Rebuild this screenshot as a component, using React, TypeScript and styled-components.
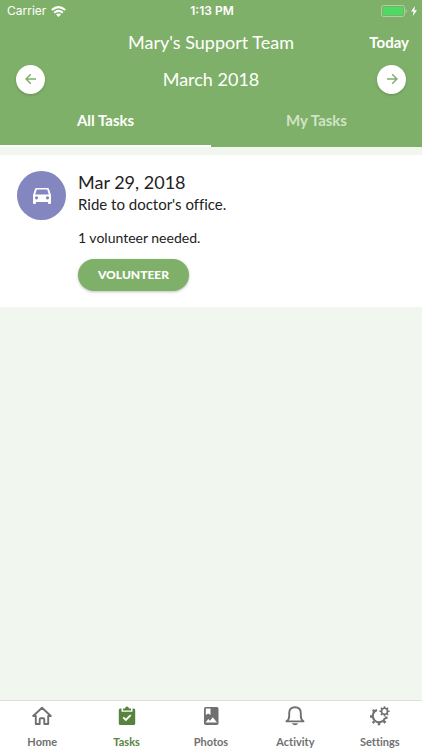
import React, { useState } from "react";
import styled, { createGlobalStyle } from "styled-components";

const GREEN = "#7fb069";

const GlobalStyle = createGlobalStyle`
  *, *::before, *::after { box-sizing: border-box; }
  body { margin: 0; background: #f1f6ef; color: #222; font-family: Lato, "Open Sans", sans-serif; font-variant-ligatures: none; }
  button { font: inherit; border: 0; padding: 0; cursor: pointer; }
  svg { display: block; flex: none; }
`;

const Screen = styled.div`
  min-height: 100vh;
  display: flex;
  flex-direction: column;
`;

const Header = styled.header`
  background: ${GREEN};
  color: #fff;
`;

const StatusBar = styled.div`
  display: grid;
  grid-template-columns: 1fr auto 1fr;
  align-items: center;
  height: 22px;
  padding: 0 5px 0 7px;
  font: 400 12px/22px Inter, sans-serif;
`;

const StatusGroup = styled.div<{ $end?: boolean }>`
  display: flex;
  align-items: center;
  gap: ${(p) => (p.$end ? 4 : 5)}px;
  justify-content: ${(p) => (p.$end ? "flex-end" : "flex-start")};
`;

const Clock = styled.time`
  font-weight: 600;
`;

const TitleRow = styled.div`
  display: grid;
  grid-template-columns: 1fr auto 1fr;
  align-items: center;
  height: 40px;
  padding: 0 13px;
`;

const Title = styled.h1`
  grid-column: 2;
  margin: 0;
  font-size: 18px;
  line-height: 24px;
  font-weight: 400;
`;

const TodayButton = styled.button`
  justify-self: end;
  background: none;
  color: #fff;
  && { font-weight: 700; font-size: 15px; line-height: 24px; }
`;

const MonthRow = styled.div`
  display: flex;
  align-items: center;
  justify-content: space-between;
  height: 34px;
  padding: 0 16px;
`;

const Month = styled.h2`
  margin: 0;
  font-size: 18px;
  line-height: 24px;
  font-weight: 400;
`;

const RoundButton = styled.button`
  display: grid;
  place-items: center;
  width: 29px;
  height: 29px;
  border-radius: 50%;
  background: #fff;
  color: ${GREEN};
  box-shadow: 0 1px 3px rgba(0, 0, 0, 0.2);
`;

const Tabs = styled.div`
  display: grid;
  grid-template-columns: 1fr 1fr;
`;

const Tab = styled.button<{ $active: boolean }>`
  height: 51px;
  background: none;
  color: ${(p) => (p.$active ? "#fff" : "#cfe4c6")};
  border-bottom: 2px solid ${(p) => (p.$active ? "#fff" : "transparent")};
  && { padding-bottom: 2px; font-weight: 700; font-size: 15px; line-height: 20px; }
`;

const Content = styled.main`
  flex: 1;
  padding-top: 8px;
`;

const TaskCard = styled.article`
  display: flex;
  align-items: flex-start;
  gap: 12px;
  padding: 16px 17px;
  background: #fff;
`;

const Badge = styled.div`
  display: grid;
  place-items: center;
  flex: none;
  width: 49px;
  height: 49px;
  border-radius: 50%;
  background: #8386bf;
  color: #fff;
`;

const TaskBody = styled.div`
  display: flex;
  flex-direction: column;
  align-items: flex-start;
`;

const TaskDate = styled.h3`
  margin: 0;
  font-size: 18px;
  line-height: 22px;
  font-weight: 400;
`;

const TaskText = styled.p`
  margin: 0;
  font-size: 15px;
  line-height: 22px;
`;

const TaskNeed = styled.p`
  margin: 13px 0 11px;
  font-size: 14px;
  line-height: 20px;
`;

const VolunteerButton = styled.button`
  height: 32px;
  border-radius: 16px;
  background: ${GREEN};
  color: #fff;
  box-shadow: 0 1px 3px rgba(0, 0, 0, 0.25);
  && { padding: 0 20px; font-weight: 900; font-size: 12px; line-height: 32px; }
`;

const TabBar = styled.nav`
  position: sticky;
  bottom: 0;
  display: grid;
  grid-template-columns: repeat(5, 1fr);
  height: 50px;
  background: #fff;
  border-top: 1px solid #dcdfdb;
`;

const NavLink = styled.a<{ $active?: boolean }>`
  display: flex;
  flex-direction: column;
  align-items: center;
  gap: 7px;
  padding-top: 4px;
  color: ${(p) => (p.$active ? "#56843f" : "#707070")};
  font-size: 11px;
  line-height: 16px;
  font-weight: 700;
  text-decoration: none;
`;

const WifiIcon = () => (
  <svg width="15" height="11" viewBox="0 0 15 11" fill="none" stroke="currentColor" strokeWidth="2.1" aria-hidden="true">
    <path d="M.8 4Q7.5-1.8 14.2 4M3.2 6.7Q7.5 3.1 11.8 6.7" />
    <path d="M5 8.4Q7.5 6.5 10 8.400L7.500 11Z" fill="currentColor" stroke="none" />
  </svg>
);

const BatteryIcon = () => (
  <svg width="26" height="12" viewBox="0 0 26 12" aria-hidden="true">
    <rect x=".5" y=".5" width="23" height="11" rx="2" fill="none" stroke="#b0cea3" />
    <rect x="2" y="2" width="20" height="8" rx="1" fill="#4cd964" />
    <path d="M24.7 4Q26 4.5 26 6T24.7 8Z" fill="#b0cea3" />
  </svg>
);

const BoltIcon = () => (
  <svg width="6" height="10" viewBox="0 0 6 10" fill="currentColor" aria-hidden="true">
    <path d="M4 0 0 5.6H2.6L1.8 10 6 4.2H3.4Z" />
  </svg>
);

const ArrowIcon = ({ back = false }: { back?: boolean }) => (
  <svg width="12" height="12" viewBox="0 0 12 12" fill="none" stroke="currentColor" strokeWidth="1.5" aria-hidden="true">
    <path d={back ? "M11 6H1.3M5.8 1.3 1.1 6 5.8 10.7" : "M1 6H10.7M6.2 1.3 10.9 6 6.2 10.7"} />
  </svg>
);

const CarIcon = () => (
  <svg width="24" height="24" viewBox="0 0 24 24" fill="currentColor" aria-hidden="true">
    <path
      fillRule="evenodd"
      d="M6.500 4H17.500Q18.600 4 19 5L21 11V19Q21 20 20 20H19Q18 20 18 19V18H6V19Q6 20 5 20H4Q3 20 3 19V11L5 5Q5.400 4 6.500 4ZM6.800 5.600 5.200 10.500H18.800L17.200 5.600ZM6.500 12.200A1.600 1.600 0 1 0 6.500 15.400 1.600 1.600 0 1 0 6.500 12.200ZM17.500 12.200A1.600 1.600 0 1 0 17.500 15.400 1.600 1.600 0 1 0 17.500 12.200Z"
    />
  </svg>
);

const HomeIcon = () => (
  <svg width="22" height="22" viewBox="0 0 22 22" fill="none" stroke="currentColor" strokeWidth="1.9" strokeLinejoin="round" strokeLinecap="round" aria-hidden="true">
    <path d="M2.200 11 11 2.700 19.800 11H17.200V19H13.300V14.200Q13.300 13.200 12.300 13.200H9.700Q8.700 13.200 8.700 14.200V19H4.800V11Z" />
  </svg>
);

const TasksIcon = () => (
  <svg width="22" height="22" viewBox="0 0 22 22" aria-hidden="true">
    <path d="M4.300 3.500H5.500V6.800H16.500V3.500H17.700Q19.200 3.500 19.200 5V18.500Q19.200 20 17.700 20H4.300Q2.800 20 2.800 18.500V5Q2.800 3.500 4.300 3.500Z" fill="currentColor" />
    <path d="M7 5.500V3.500H9Q9.300 1.500 11 1.500T13 3.500H15V5.500Z" fill="currentColor" />
    <path d="m7.300 12.300 2.600 2.600 4.800-4.800" fill="none" stroke="#fff" strokeWidth="1.900" />
  </svg>
);

const PhotosIcon = () => (
  <svg width="22" height="22" viewBox="0 0 22 22" aria-hidden="true">
    <rect x="4" y="2" width="14.500" height="18" rx="1.800" fill="currentColor" />
    <path d="M5.800 3.500H10.500V10L8.200 8.500 5.800 10Z" fill="#fff" />
    <path d="M5.500 17.500 8.300 14 10 15.800 12.800 12.300 17 17.500Z" fill="#fff" />
  </svg>
);

const BellIcon = () => (
  <svg width="22" height="22" viewBox="0 0 22 22" aria-hidden="true">
    <path d="M2.500 16.400Q5.200 14.500 5.200 11V8Q5.200 2.300 11 2.300T16.800 8V11Q16.800 14.500 19.500 16.400Z" fill="none" stroke="currentColor" strokeWidth="1.900" strokeLinejoin="round" />
    <path d="M7.800 18.300H14.200Q13.200 20.200 11 20.200T7.800 18.300Z" fill="currentColor" />
  </svg>
);

const SettingsIcon = () => (
  <svg width="22" height="22" viewBox="0 0 22 22" fill="none" stroke="currentColor" aria-hidden="true">
    <path d="M8 5A6.300 6.300 0 1 0 16 13" strokeWidth="2" />
    <path d="M5.300 6.300 3.800 4.800M3.500 11.500H1M5.300 16.300 3.700 18M10 17.500V20.300M14.500 16 16.500 17.800M16 12.800H18.500" strokeWidth="2.500" />
    <circle cx="15.500" cy="6.300" r="3" strokeWidth="1.600" />
    <path d="M15.500 1.200V3.300M15.500 9.300v2.100M10.400 6.300H12.500M18.500 6.300h2.100M11.900 2.700 13.400 4.200M17.600 8.400 19.100 9.900M19.100 2.700 17.600 4.200M13.400 8.400 11.900 9.900" strokeWidth="1.600" />
  </svg>
);

const NAV = [
  { label: "Home", Icon: HomeIcon },
  { label: "Tasks", Icon: TasksIcon },
  { label: "Photos", Icon: PhotosIcon },
  { label: "Activity", Icon: BellIcon },
  { label: "Settings", Icon: SettingsIcon },
];

const TABS = ["All Tasks", "My Tasks"];

export default function App() {
  const [tab, setTab] = useState(TABS[0]);
  return (
    <Screen>
      <GlobalStyle />
      <Header>
        <StatusBar>
          <StatusGroup>
            Carrier <WifiIcon />
          </StatusGroup>
          <Clock>1:13 PM</Clock>
          <StatusGroup $end>
            <BatteryIcon />
            <BoltIcon />
          </StatusGroup>
        </StatusBar>
        <TitleRow>
          <Title>Mary's Support Team</Title>
          <TodayButton type="button">Today</TodayButton>
        </TitleRow>
        <MonthRow>
          <RoundButton type="button" aria-label="Previous month">
            <ArrowIcon back />
          </RoundButton>
          <Month>March 2018</Month>
          <RoundButton type="button" aria-label="Next month">
            <ArrowIcon />
          </RoundButton>
        </MonthRow>
        <Tabs role="tablist">
          {TABS.map((name) => (
            <Tab key={name} type="button" role="tab" aria-selected={tab === name} $active={tab === name} onClick={() => setTab(name)}>
              {name}
            </Tab>
          ))}
        </Tabs>
      </Header>
      <Content>
        <TaskCard>
          <Badge>
            <CarIcon />
          </Badge>
          <TaskBody>
            <TaskDate>Mar 29, 2018</TaskDate>
            <TaskText>Ride to doctor's office.</TaskText>
            <TaskNeed>1 volunteer needed.</TaskNeed>
            <VolunteerButton type="button">VOLUNTEER</VolunteerButton>
          </TaskBody>
        </TaskCard>
      </Content>
      <TabBar>
        {NAV.map(({ label, Icon }) => (
          <NavLink key={label} href={"#" + label.toLowerCase()} $active={label === "Tasks"}>
            <Icon />
            {label}
          </NavLink>
        ))}
      </TabBar>
    </Screen>
  );
}
